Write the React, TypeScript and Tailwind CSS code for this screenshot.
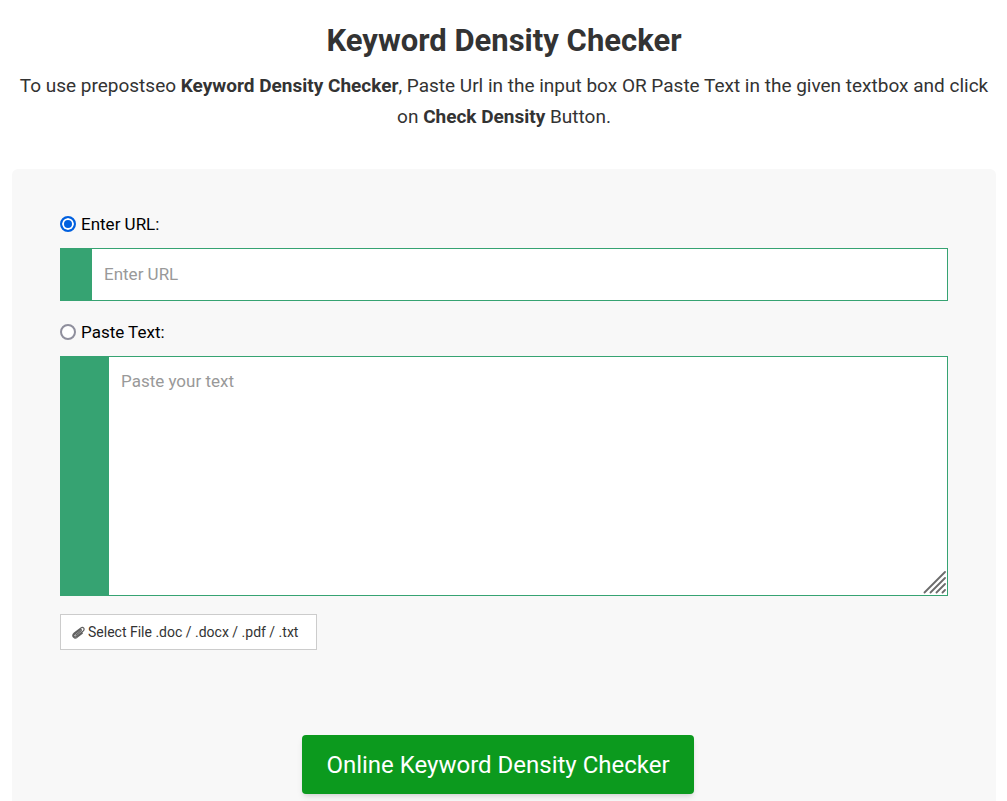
import { useState } from "react";

const radioClass = "size-4 mr-[5px] appearance-none rounded-full border-2 border-[#8f8f9d] bg-white checked:border-[#0060df] checked:bg-[#0060df] checked:shadow-[inset_0_0_0_2px_#ffffff]";

function PaperclipIcon() {
    return (
        <svg className="w-[13px] h-[13px] shrink-0" viewBox="0 0 13 13" fill="none" stroke="#606060" strokeWidth="1.2" strokeLinecap="round" strokeLinejoin="round" aria-hidden="true">
            <path d="M3.800 9.200 9 4.800c.9-.8 0-1.900-1-1.100L2.600 8.200c-1.800 1.600 0 3.700 1.900 2.200l6.400-5.100c2.600-2.200.3-5-2.300-3.100L2.300 7c-3.200 2.600-.4 6.700 2.700 4.400l5.300-4.200" />
        </svg>
    );
}

function ResizeGrip() {
    return (
        <svg className="absolute right-0.5 bottom-0.5 w-6 h-6 pointer-events-none" viewBox="0 0 24 24" stroke="#6b6b6b" strokeWidth="1.8" strokeLinecap="round" aria-hidden="true">
            <path d="M2.500 22.500 23 2M8.500 22.500 23 8M14.500 22.500 23 14M20.500 22.500 23 20" />
        </svg>
    );
}

export default function App() {
    const [source, setSource] = useState("url");

    return (
        <div className="min-h-screen flex flex-col bg-white pl-3 pr-[11px] font-['Roboto',sans-serif] text-[#333333]">
            <header className="pt-5 pb-[37px] text-center">
                <h1 className="text-[31px] leading-[42px] font-bold">Keyword Density Checker</h1>
                <p className="mt-2 text-[19px] leading-[31px]">
                    To use prepostseo <b>Keyword Density Checker</b>, Paste Url in the input box OR Paste Text in the given textbox and click on <b>Check Density</b> Button.
                </p>
            </header>

            <form className="flex-1 rounded-t-md bg-[#f8f8f8] px-12 pt-[43px] pb-1" onSubmit={(e) => e.preventDefault()}>
                <div className="flex items-center text-[17px] leading-6 text-black">
                    <input id="source-url" type="radio" name="source" className={radioClass} checked={source === "url"} onChange={() => setSource("url")} />
                    <label htmlFor="source-url">Enter URL:</label>
                </div>
                <input type="text" aria-label="Enter URL" placeholder="Enter URL" className="block mt-3 w-full h-[53px] rounded-none border border-l-[32px] border-[#36a372] bg-white px-3 pb-0.5 text-[17px] placeholder:text-[#999999] outline-none" />

                <div className="mt-[19px] flex items-center text-[17px] leading-6 text-black">
                    <input id="source-text" type="radio" name="source" className={radioClass} checked={source === "text"} onChange={() => setSource("text")} />
                    <label htmlFor="source-text">Paste Text:</label>
                </div>
                <div className="relative mt-3">
                    <textarea aria-label="Paste your text" placeholder="Paste your text" className="block w-full h-60 resize-none rounded-none border border-l-[49px] border-[#36a372] bg-white px-3 py-3 text-[17px] leading-6 placeholder:text-[#999999] outline-none" />
                    <ResizeGrip />
                </div>

                <button type="button" className="mt-[18px] flex h-9 items-center gap-[3px] border border-[#cccccc] bg-white pl-[11px] pr-[18px] text-sm text-[#333333]">
                    <PaperclipIcon />
                    Select File .doc / .docx / .pdf / .txt
                </button>

                <div className="mt-[85px] pr-3 flex justify-center">
                    <button type="submit" className="h-[59px] rounded bg-[#0c9a1e] px-6 text-2xl text-white shadow-md">Online Keyword Density Checker</button>
                </div>
            </form>
        </div>
    );
}
